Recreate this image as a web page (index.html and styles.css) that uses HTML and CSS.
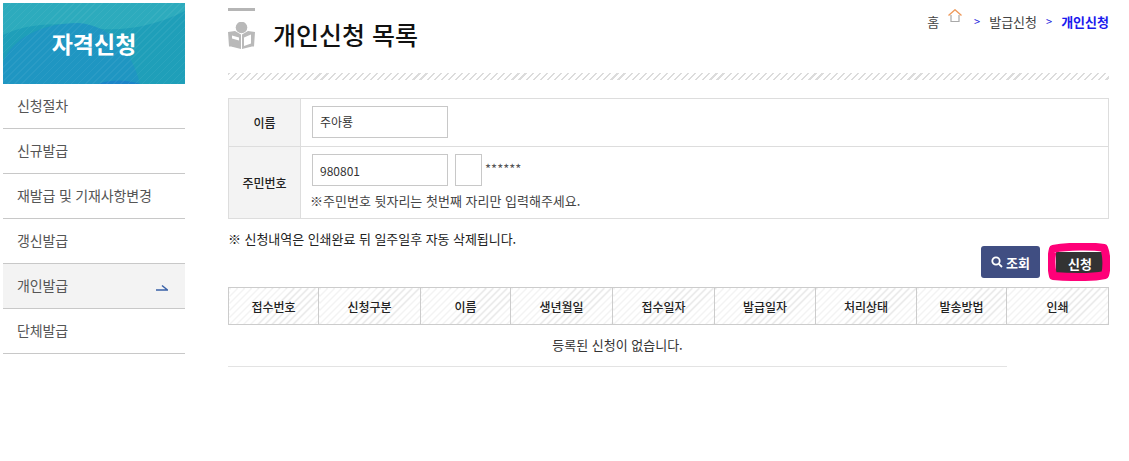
FILE: index.html
```html
<!DOCTYPE html>
<html lang="ko">
<head>
    <meta charset="UTF-8">
    <title>개인신청 목록</title>
    <link rel="stylesheet" href="styles.css">
</head>
<body>
<div class="wrap">
    <!-- left menu -->
    <aside class="side">
        <div class="side-title">
            <svg class="side-bg" width="182" height="81" viewBox="0 0 182 81">
                <rect width="182" height="81" fill="#1f9fb9"/>
                <path d="M0 0H182V8C150 24 115 30 85 24C50 18 20 22 0 32Z" fill="#2dabbd"/>
                <path d="M0 60C8 35 40 20 75 20C105 22 128 45 137 81H0Z" fill="#1f96c2"/>
                <path d="M95 81C110 76 125 77 137 81Z" fill="#1b85c8"/>
            </svg>
            <span>자격신청</span>
        </div>
        <ul class="side-menu">
            <li><a href="#">신청절차</a></li>
            <li><a href="#">신규발급</a></li>
            <li><a href="#">재발급 및 기재사항변경</a></li>
            <li><a href="#">갱신발급</a></li>
            <li class="on">
                <a href="#">개인발급</a>
                <svg class="on-arrow" width="12" height="7" viewBox="0 0 12 7"><path d="M0 6H11.5L6 1.5" fill="none" stroke="#3a62a8" stroke-width="1.5"/></svg>
            </li>
            <li><a href="#">단체발급</a></li>
        </ul>
    </aside>

    <!-- content -->
    <main class="main">
        <div class="top">
            <div class="title-box">
                <svg class="title-icon" width="27" height="27" viewBox="0 0 27 27">
                    <circle cx="13.5" cy="5.5" r="5.8" fill="#b9b9b9"/>
                    <path d="M0 10L7 9L13 12.5V27L3 24.5H1Z M27 10L20 9L14 12.5V27L24 24.5H26Z" fill="#b9b9b9"/>
                    <path d="M4 13.5L11 15.5V18.5L4 16.5Z" fill="#fff"/>
                    <path d="M16 15.5L23 12.5V21.5L16 24Z" fill="#fff"/>
                </svg>
                <h1>개인신청 목록</h1>
            </div>
            <div class="crumb">
                <span>홈</span>
                <svg class="home" width="14" height="13" viewBox="0 0 14 13">
                    <path d="M3 6V12.5H11V6" fill="none" stroke="#a9a9a9" stroke-width="1.2"/>
                    <path d="M0.5 6.5L7 0.8L13.5 6.5" fill="none" stroke="#ee9a5c" stroke-width="1.4"/>
                </svg>
                <i>&gt;</i>
                <span>발급신청</span>
                <i>&gt;</i>
                <b>개인신청</b>
            </div>
        </div>
        <div class="stripe"></div>

        <table class="form-table">
            <tr class="row-name">
                <th>이름</th>
                <td><input class="inp" type="text" value="주아룡"></td>
            </tr>
            <tr>
                <th>주민번호</th>
                <td class="jumin">
                    <div class="jumin-row">
                        <input class="inp" type="text" value="980801">
                        <input class="inp small" type="text">
                        <span class="star">******</span>
                    </div>
                    <p>※주민번호 뒷자리는 첫번째 자리만 입력해주세요.</p>
                </td>
            </tr>
        </table>

        <p class="notice">※ 신청내역은 인쇄완료 뒤 일주일후 자동 삭제됩니다.</p>

        <div class="btns">
            <a class="btn blue" href="#">
                <svg width="12" height="12" viewBox="0 0 12 12"><circle cx="5" cy="5" r="3.7" fill="none" stroke="#fff" stroke-width="1.8"/><path d="M7.8 7.8L11 11" stroke="#fff" stroke-width="1.8"/></svg>
                조회
            </a>
            <a class="btn dark" href="#">
                신청
                <svg class="mark" width="62" height="38" viewBox="0 0 62 38"><path d="M5 6C20 3 45 3 56 5C59 12 59 26 57 32C42 35 18 34 5 33C3 24 3 14 5 6Z" fill="none" stroke="#ff0078" stroke-width="8" stroke-linejoin="round"/></svg>
            </a>
        </div>

        <table class="list">
            <colgroup>
                <col class="c90"><col class="c102"><col class="c90"><col class="c102"><col class="c102"><col class="c101"><col class="c101"><col class="c90"><col class="c102">
            </colgroup>
            <thead>
                <tr>
                    <th>접수번호</th><th>신청구분</th><th>이름</th><th>생년월일</th><th>접수일자</th><th>발급일자</th><th>처리상태</th><th>발송방법</th><th>인쇄</th>
                </tr>
            </thead>
        </table>
        <div class="empty">등록된 신청이 없습니다.</div>
    </main>
</div>
</body>
</html>
```

FILE: styles.css
```css
* {
    box-sizing: border-box;
}

body {
    margin: 0;
    padding: 0;
    background-color: #ffffff;
    font-family: "Noto Sans CJK KR", "Noto Sans", sans-serif;
    font-size: 13px;
    color: #333333;
}

a {
    color: inherit;
    text-decoration: none;
}

.wrap {
    display: flex;
    align-items: flex-start;
    padding: 3px 0 0 3px;
}

/* left menu */
.side {
    width: 182px;
    flex-shrink: 0;
}

.side-title {
    position: relative;
    height: 81px;
    display: flex;
    align-items: center;
    justify-content: center;
    padding-bottom: 2px;
    overflow: hidden;
}

.side-bg {
    position: absolute;
    top: 0;
    left: 0;
}

.side-title::after {
    content: "";
    position: absolute;
    inset: 0;
    background: repeating-linear-gradient(135deg, rgba(255, 255, 255, 0.05) 0 1px, transparent 1px 5px);
}

.side-title span {
    position: relative;
    z-index: 1;
    font-size: 23px;
    font-weight: 700;
    line-height: 30px;
    color: #ffffff;
}

.side-menu {
    list-style: none;
    margin: 0;
    padding: 0;
}

.side-menu li {
    height: 45px;
    display: flex;
    align-items: center;
    justify-content: space-between;
    padding: 0 17px 2px 14px;
    border-bottom: 1px solid #c8c8c8;
    font-size: 14px;
    letter-spacing: -0.17px;
    color: #555555;
}

.side-menu li.on {
    background-color: #f3f3f3;
}

.side-menu li:nth-child(5) {
    box-shadow: 0 -1px 0 #c8c8c8;
}

.on-arrow {
    margin-top: 5px;
}

/* content */
.main {
    width: 881px;
    margin-left: 43px;
}

.top {
    display: flex;
    justify-content: space-between;
    height: 70px;
}

.title-box {
    position: relative;
    display: flex;
    align-items: flex-start;
    gap: 18px;
    padding-top: 17px;
}

.title-box::before {
    content: "";
    position: absolute;
    top: 5px;
    left: 0;
    width: 27px;
    height: 3px;
    background-color: #b5b5b5;
}

.title-icon {
    flex-shrink: 0;
    margin-top: 2px;
}

.title-box h1 {
    margin: 0;
    font-size: 25px;
    font-weight: 500;
    line-height: 28px;
    color: #111111;
}

.crumb {
    display: flex;
    align-items: flex-start;
    padding-top: 9px;
    font-size: 13px;
    line-height: 19px;
    color: #444444;
}

.crumb .home {
    margin: -3px 0 0 9px;
}

.crumb i {
    margin: 0 9px;
    font-style: normal;
    font-size: 11px;
    color: #2222dd;
}

.crumb .home + i {
    margin-left: 12px;
}

.crumb b {
    font-size: 13px;
    color: #1a1aee;
}

.stripe {
    height: 7px;
    background: repeating-linear-gradient(135deg, #dcdcdc 0 1.5px, #ffffff 1.5px 5px);
}

.form-table {
    width: 881px;
    margin-top: 18px;
    border-collapse: collapse;
}

.form-table th,
.form-table td {
    border: 1px solid #dddddd;
}

.form-table th {
    width: 72px;
    background-color: #f3f3f3;
    font-size: 12px;
    font-weight: 500;
    color: #222222;
}

.form-table td {
    height: 48px;
    padding: 0 11px;
}

.form-table .row-name th,
.form-table .row-name td {
    padding-bottom: 2px;
}

.form-table td.jumin {
    height: 72px;
    padding-top: 7px;
    vertical-align: top;
}

.inp {
    display: block;
    width: 136px;
    height: 32px;
    padding: 0 7px;
    border: 1px solid #c8c8c8;
    background-color: #ffffff;
    font-family: inherit;
    font-size: 12px;
    color: #333333;
}

.inp.small {
    width: 27px;
}

.jumin-row {
    display: flex;
    gap: 7px;
}

.star {
    margin-left: -4px;
    font-size: 13px;
    line-height: 30px;
    color: #555555;
}

.jumin p {
    margin: 5px 0 0 -2px;
    font-size: 13px;
    line-height: 20px;
    color: #444444;
}

.notice {
    margin: 10px 0 0;
    font-size: 13px;
    line-height: 20px;
    letter-spacing: -0.05px;
    color: #222222;
}

.btns {
    display: flex;
    justify-content: flex-end;
    gap: 16px;
    margin: -3px 5px 0 0;
    height: 41px;
}

.btn {
    display: flex;
    align-items: center;
    justify-content: center;
    font-size: 13px;
    font-weight: 700;
    color: #ffffff;
}

.btn.blue {
    width: 59px;
    height: 32px;
    gap: 3px;
    border-radius: 3px;
    background-color: #404e82;
}

.btn.dark {
    position: relative;
    width: 48px;
    height: 22px;
    margin-top: 6px;
    background-color: #333333;
}

.mark {
    position: absolute;
    top: -9px;
    left: -8px;
}

.list {
    width: 881px;
    border-collapse: collapse;
    table-layout: fixed;
}

.c90 {
    width: 90px;
}

.c101 {
    width: 101px;
}

.c102 {
    width: 102px;
}

.list th {
    height: 37px;
    padding: 0;
    border: 1px solid #cccccc;
    background: repeating-linear-gradient(135deg, #e6e6e6 0 1px, #ffffff 1px 5px);
    font-size: 12px;
    font-weight: 500;
    color: #222222;
}

.empty {
    width: 779px;
    height: 42px;
    border-bottom: 1px solid #e3e3e3;
    text-align: center;
    font-size: 13px;
    line-height: 40px;
    color: #333333;
}
```
